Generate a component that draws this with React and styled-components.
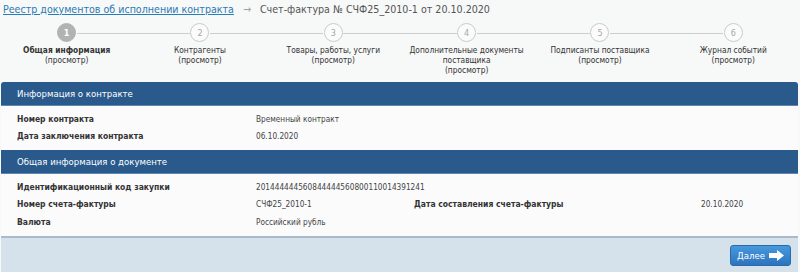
import React from "react";
import styled, { createGlobalStyle } from "styled-components";

const GlobalStyle = createGlobalStyle`
  html, body {
    margin: 0;
    padding: 0;
    background: #f7f8f8;
  }
  body {
    font-family: "DejaVu Sans Condensed", "Liberation Sans", sans-serif;
    color: #333;
  }
`;

const steps = [
  { title: ["Общая информация"], active: true },
  { title: ["Контрагенты"] },
  { title: ["Товары, работы, услуги"] },
  { title: ["Дополнительные документы", "поставщика"] },
  { title: ["Подписанты поставщика"] },
  { title: ["Журнал событий"] },
];

export default function App() {
  return (
    <>
      <GlobalStyle />
      <Page>
        <Breadcrumbs>
          <CrumbLink href="#">Реестр документов об исполнении контракта</CrumbLink>
          <CrumbArrow>→</CrumbArrow>
          <CrumbCurrent>Счет-фактура № СЧФ25_2010-1 от 20.10.2020</CrumbCurrent>
        </Breadcrumbs>

        <Steps>
          {steps.map((s, i) => (
            <Step key={i}>
              <StepMarker $first={i === 0} $last={i === steps.length - 1}>
                <Circle $active={s.active}>{i + 1}</Circle>
              </StepMarker>
              {s.title.map((line) => (
                <StepTitle key={line} $active={s.active}>
                  {line}
                </StepTitle>
              ))}
              <StepSub>(просмотр)</StepSub>
            </Step>
          ))}
        </Steps>

        <Panel>
          <PanelHeader>Информация о контракте</PanelHeader>
          <Fields>
            <Label>Номер контракта</Label>
            <Value $span>Временный контракт</Value>
            <Label>Дата заключения контракта</Label>
            <Value $span>06.10.2020</Value>
          </Fields>

          <PanelHeader>Общая информация о документе</PanelHeader>
          <Fields>
            <Label>Идентификационный код закупки</Label>
            <Value $span>201444444560844444560800110014391241</Value>
            <Label>Номер счета-фактуры</Label>
            <Value>СЧФ25_2010-1</Value>
            <Label>Дата составления счета-фактуры</Label>
            <Value>20.10.2020</Value>
            <Label>Валюта</Label>
            <Value $span>Российский рубль</Value>
          </Fields>

          <Footer>
            <NextButton type="button">
              Далее
              <svg width="15" height="11" viewBox="0 0 15 11">
                <path d="M0 3h8V0l7 5.5L8 11V8H0z" fill="#fff" />
              </svg>
            </NextButton>
          </Footer>
        </Panel>
      </Page>
    </>
  );
}

const Page = styled.div`
  width: 800px;
  height: 272px;
  overflow: hidden;
`;

const Breadcrumbs = styled.div`
  display: flex;
  align-items: center;
  gap: 9px;
  height: 17px;
  padding-left: 3px;
  font-size: 10.6px;
`;

const CrumbLink = styled.a`
  color: #2b7bb5;
  text-decoration: underline;
`;

const CrumbArrow = styled.span`
  color: #a0a0a0;
`;

const CrumbCurrent = styled.span`
  color: #555;
`;

const Steps = styled.div`
  display: flex;
  height: 59px;
  margin-top: 6px;
`;

const Step = styled.div`
  flex: 1;
  display: flex;
  flex-direction: column;
  align-items: center;
  text-align: center;
  font-size: 8.3px;
  line-height: 10px;
  color: #333;
  white-space: nowrap;
`;

const StepMarker = styled.div`
  position: relative;
  width: 100%;
  display: flex;
  justify-content: center;
  margin-bottom: 3px;

  &::before,
  &::after {
    content: "";
    position: absolute;
    top: 10px;
    height: 1px;
    background: #cdcdcd;
  }
  &::before {
    left: 0;
    right: calc(50% + 10px);
    display: ${({ $first }) => ($first ? "none" : "block")};
  }
  &::after {
    left: calc(50% + 10px);
    right: 0;
    display: ${({ $last }) => ($last ? "none" : "block")};
  }
`;

const Circle = styled.div`
  width: 17px;
  height: 17px;
  border-radius: 50%;
  border: 1.5px solid ${({ $active }) => ($active ? "#b2b2b2" : "#cbcbcb")};
  background: ${({ $active }) => ($active ? "#b2b2b2" : "#fbfbfb")};
  color: ${({ $active }) => ($active ? "#fff" : "#a8a8a8")};
  font-size: 9px;
  font-weight: ${({ $active }) => ($active ? "bold" : "normal")};
  display: flex;
  align-items: center;
  justify-content: center;
`;

const StepTitle = styled.div`
  font-weight: ${({ $active }) => ($active ? "bold" : "normal")};
`;

const StepSub = styled.div``;

const Panel = styled.div`
  margin: 0 2px 0 1px;
  background: #fbfbfc;
  border-radius: 3px 3px 0 0;
  overflow: hidden;
`;

const PanelHeader = styled.div`
  height: 24px;
  display: flex;
  align-items: center;
  padding-left: 16px;
  background: #295a8b;
  border-bottom: 1px solid #5d87b0;
  box-sizing: border-box;
  color: #fff;
  font-size: 9.5px;
`;

const Fields = styled.div`
  display: grid;
  grid-template-columns: 239px 158px 287px 1fr;
  grid-auto-rows: 17.5px;
  align-items: center;
  padding: 4px 0 5px 16px;
`;

const Label = styled.div`
  font-weight: bold;
  font-size: 8.5px;
  color: #333;
`;

const Value = styled.div`
  color: #444;
  font-size: 8.2px;
  grid-column: ${({ $span }) => ($span ? "span 3" : "auto")};
  white-space: nowrap;
`;

const Footer = styled.div`
  height: 37px;
  box-sizing: border-box;
  border-top: 2px solid #a9bacb;
  background: #d5e1eb;
  display: flex;
  align-items: center;
  justify-content: flex-end;
  padding-right: 7px;
`;

const NextButton = styled.button`
  display: flex;
  align-items: center;
  gap: 4px;
  height: 21px;
  padding: 0 6px 0 6px;
  border: 1px solid #2a6aa8;
  border-radius: 3px;
  background: linear-gradient(#4799dc, #2c74be);
  color: #fff;
  font-family: inherit;
  font-size: 9.5px;
  cursor: pointer;
`;
